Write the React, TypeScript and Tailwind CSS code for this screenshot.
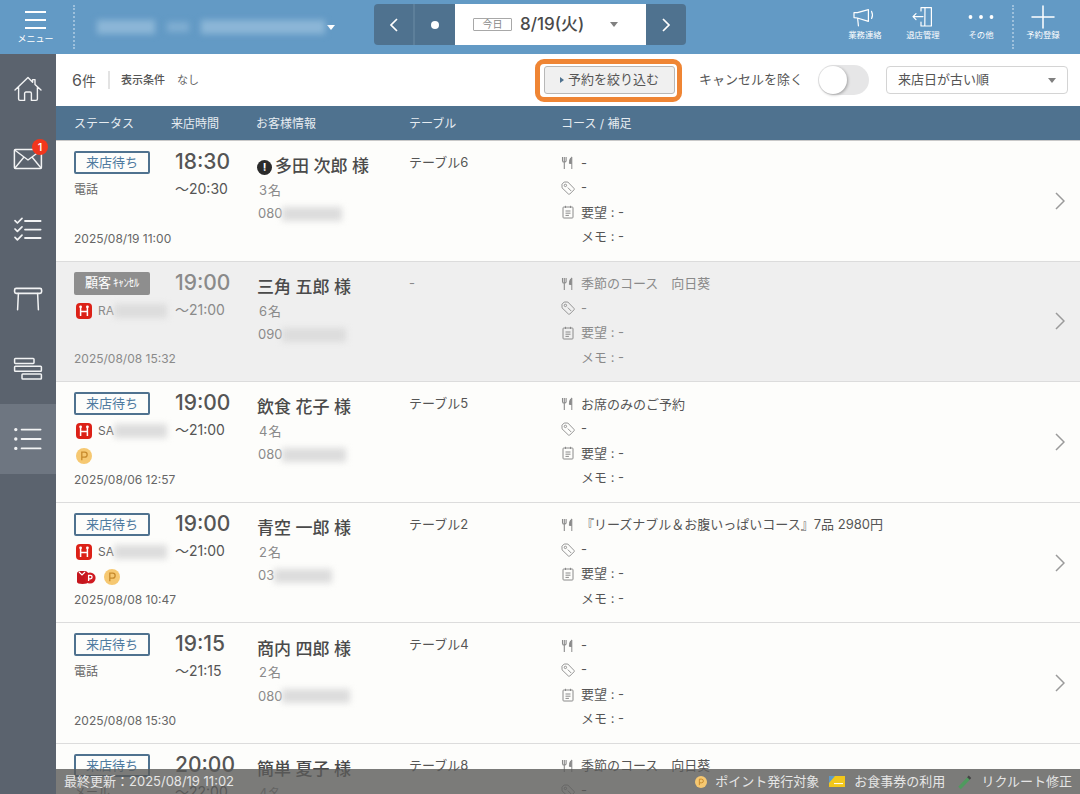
import React from "react";

type Row = {
  status: "wait" | "cancel";
  time: string;
  end: string;
  source?: string;
  code?: string;
  coin?: boolean;
  redPoint?: boolean;
  date: string;
  name: string;
  alert?: boolean;
  count: string;
  tel: string;
  telBlur: number;
  table: string;
  course: string;
};

const rows: Row[] = [
  { status: "wait", time: "18:30", end: "〜20:30", source: "電話", date: "2025/08/19 11:00", name: "多田 次郎 様", alert: true, count: "3名", tel: "080", telBlur: 60, table: "テーブル6", course: "-" },
  { status: "cancel", time: "19:00", end: "〜21:00", code: "RA", date: "2025/08/08 15:32", name: "三角 五郎 様", count: "6名", tel: "090", telBlur: 64, table: "-", course: "季節のコース　向日葵" },
  { status: "wait", time: "19:00", end: "〜21:00", code: "SA", coin: true, date: "2025/08/06 12:57", name: "飲食 花子 様", count: "4名", tel: "080", telBlur: 64, table: "テーブル5", course: "お席のみのご予約" },
  { status: "wait", time: "19:00", end: "〜21:00", code: "SA", coin: true, redPoint: true, date: "2025/08/08 10:47", name: "青空 一郎 様", count: "2名", tel: "03", telBlur: 58, table: "テーブル2", course: "『リーズナブル＆お腹いっぱいコース』7品 2980円" },
  { status: "wait", time: "19:15", end: "〜21:15", source: "電話", date: "2025/08/08 15:30", name: "商内 四郎 様", count: "2名", tel: "080", telBlur: 68, table: "テーブル4", course: "-" },
  { status: "wait", time: "20:00", end: "〜22:00", source: "メール", date: "", name: "簡単 夏子 様", count: "4名", tel: "", telBlur: 0, table: "テーブル8", course: "季節のコース　向日葵" },
];

const Blurred = ({ w, h = 14, className = "bg-[#dcdcdc]" }: { w: number; h?: number; className?: string }) => (
  <span className={`inline-block shrink-0 blur-[3px] ${className}`} style={{ width: w, height: h }} />
);

const Coin = ({ size = 16 }: { size?: number }) => (
  <svg width={size} height={size} viewBox="0 0 16 16" className="shrink-0">
    <circle cx="8" cy="8" r="8" fill="#f6c871" />
    <path d="M5.8 12.2V4.2h2.9a2.4 2.4 0 0 1 0 4.9H5.8" fill="none" stroke="#c78a2c" strokeWidth="1.3" />
  </svg>
);

const RedH = () => (
  <svg width="16" height="16" viewBox="0 0 16 16" className="shrink-0">
    <rect width="16" height="16" rx="4" fill="#dc2117" />
    <path d="M4.6 4v9M11.4 4v9M4.6 8.6h6.8" stroke="#fff" strokeWidth="1.5" fill="none" />
    <circle cx="4.6" cy="3.8" r="1.4" fill="#fff" />
    <circle cx="11.4" cy="3.8" r="1.4" fill="#fff" />
  </svg>
);

const RedPoint = () => (
  <svg width="20" height="14" viewBox="0 0 20 14" className="shrink-0">
    <path d="M1 3.5C1 1.5 3 1 6.5 1S12 1.5 12 3.5V12c0 1-2 2-5.5 2S1 13 1 12z" fill="#c5161d" />
    <path d="M3 2l3 3 3-3" fill="none" stroke="#fff" strokeWidth="1.2" />
    <circle cx="14" cy="8" r="5.6" fill="#d01a20" />
    <path d="M12.6 11V5.4h1.8a1.6 1.6 0 0 1 0 3.4h-1.8" fill="none" stroke="#fff" strokeWidth="1.3" />
  </svg>
);

const Fork = () => (
  <svg width="14" height="14" viewBox="0 0 14 14" className="shrink-0" fill="none" stroke="#8a8a8a">
    <path d="M1.5 1v3.4a1.8 1.8 0 0 0 3.6 0V1M3.3 1v12" strokeWidth="1.1" />
    <path d="M10.8 13V1C9 2 8.4 4.4 8.4 7.4h2.4" fill="#8a8a8a" strokeWidth="1" />
  </svg>
);

const Tag = () => (
  <svg width="14" height="14" viewBox="0 0 14 14" className="shrink-0" fill="none" stroke="#8a8a8a" strokeWidth="0.9">
    <path d="M1 3.2 3.2 1h3.6l6.2 6.4a1 1 0 0 1 0 1.4l-4.2 4.2a1 1 0 0 1-1.4 0L1 6.8z" />
    <circle cx="4.4" cy="4.4" r="1.2" />
    <path d="M6.8 6.6l3.4 3.4" />
  </svg>
);

const Memo = () => (
  <svg width="14" height="14" viewBox="0 0 14 14" className="shrink-0" fill="none" stroke="#8a8a8a" strokeWidth="1">
    <rect x="2" y="2" width="10" height="11" rx="0.8" />
    <path d="M4.5 0.8v2.2M9.5 0.8v2.2M4.5 6h5M4.5 8.2h5M4.5 10.4h3.4" />
  </svg>
);

const NavIcon = ({ children }: { children: React.ReactNode }) => (
  <svg width="32" height="32" viewBox="0 0 32 32" fill="none" stroke="#f2f3f4" strokeWidth="1.4" strokeLinecap="round" strokeLinejoin="round">
    {children}
  </svg>
);

const Sidebar = () => (
  <aside className="flex w-[56px] shrink-0 flex-col bg-[#5b636e]">
    <div className="flex h-[70px] items-center justify-center">
      <NavIcon>
        <path d="M3 17 16 4.6l4.6 4.6V6.6h2.4v5L29 17M6.6 14.6V26a1.4 1.4 0 0 0 1.4 1.4h4.6v-7a1.4 1.4 0 0 1 1.4-1.4h4a1.4 1.4 0 0 1 1.4 1.4v7H24a1.4 1.4 0 0 0 1.4-1.4V14.6" />
      </NavIcon>
    </div>
    <div className="relative flex h-[70px] items-center justify-center">
      <NavIcon>
        <rect x="2.4" y="6.4" width="27" height="19" rx="1" strokeWidth="1.5" />
        <path d="M3 7.2 16 17 29 7.2M3 25 12 14M29 25 20 14" />
      </NavIcon>
      <span className="absolute left-[32px] top-[15px] flex h-[16px] w-[16px] items-center justify-center rounded-full bg-[#f1361d] text-[11px] font-medium leading-none text-white">1</span>
    </div>
    <div className="flex h-[70px] items-center justify-center">
      <NavIcon>
        <path d="M3 7.6l2.4 2.4L10 5.4M3 16l2.4 2.4L10 13.8M3 24.4l2.4 2.4 4.6-4.6" strokeWidth="1.7" />
        <path d="M13 8h15.6M13 16.6h15.6M13 25h15.6" strokeWidth="1.8" />
      </NavIcon>
    </div>
    <div className="flex h-[70px] items-center justify-center">
      <NavIcon>
        <rect x="2.6" y="5.4" width="27" height="5" rx="1.6" strokeWidth="1.6" />
        <path d="M6.4 10.4 5.6 26.8M25.6 10.4l.8 16.4" strokeWidth="1.5" />
      </NavIcon>
    </div>
    <div className="flex h-[70px] items-center justify-center">
      <NavIcon>
        <rect x="2.6" y="5.4" width="19.4" height="5" rx="0.8" strokeWidth="1.5" />
        <rect x="2.6" y="13.2" width="26.8" height="5" rx="0.8" strokeWidth="1.5" />
        <rect x="10" y="21" width="19.4" height="5" rx="0.8" strokeWidth="1.5" />
      </NavIcon>
    </div>
    <div className="flex h-[70px] items-center justify-center bg-[#6e7681]">
      <NavIcon>
        <path d="M9.6 6.6h19M9.6 16h19M9.6 25.4h19" strokeWidth="1.8" />
        <circle cx="3.8" cy="6.6" r="1" fill="#f2f3f4" />
        <circle cx="3.8" cy="16" r="1" fill="#f2f3f4" />
        <circle cx="3.8" cy="25.4" r="1" fill="#f2f3f4" />
      </NavIcon>
    </div>
  </aside>
);

const TopAction = ({ label, children }: { label: string; children: React.ReactNode }) => (
  <div className="flex w-[58px] flex-col items-center self-start pt-[4px]">
    <svg width="26" height="26" viewBox="0 0 26 26" fill="none" stroke="#fff" strokeWidth="1.2" strokeLinecap="round" strokeLinejoin="round">
      {children}
    </svg>
    <span className="-mt-[1px] whitespace-nowrap text-[8.4px] leading-[12px] text-white">{label}</span>
  </div>
);

const TopBar = () => (
  <header className="flex h-[54px] shrink-0 items-center bg-[#639ac5] text-white">
    <div className="flex h-full w-[73px] flex-col items-center pr-[2px] pt-[11px]">
      <div className="flex w-[21px] flex-col gap-[6px]">
        <span className="h-[2px] bg-white" />
        <span className="h-[2px] bg-white" />
        <span className="h-[2px] bg-white" />
      </div>
      <span className="mt-[4px] whitespace-nowrap text-[9px] leading-[12px]">メニュー</span>
    </div>
    <div className="h-[44px] border-l-2 border-dotted border-[#9dc0dc]" />
    <div className="ml-[22px] flex w-[277px] items-center">
      <div className="flex w-[228px] items-center gap-[12px]">
        <Blurred w={58} h={14} className="bg-[#8cb6d7]" />
        <Blurred w={22} h={10} className="bg-[#80aed2]" />
        <Blurred w={124} h={14} className="bg-[#8cb6d7]" />
      </div>
      <span className="ml-[2px] h-0 w-0 border-x-[4px] border-t-[5px] border-x-transparent border-t-white" />
    </div>
    <div className="mt-[4px] flex h-[41px] w-[312px] shrink-0 self-start overflow-hidden rounded-[4px] bg-[#4f728f]">
      <div className="flex w-[41px] items-center justify-center border-r-2 border-[#5d7f9a]">
        <svg width="12" height="16" viewBox="0 0 12 16" fill="none" stroke="#fff" strokeWidth="1.7"><path d="M9 2 3 8l6 6" /></svg>
      </div>
      <div className="flex w-[40px] items-center justify-center">
        <span className="h-[8px] w-[8px] rounded-full bg-white" />
      </div>
      <div className="flex w-[191px] items-center bg-white pl-[18px]">
        <span className="flex h-[13px] w-[39px] items-center justify-center rounded-[1px] border border-[#a8a8a8] text-[10px] text-[#888]">今日</span>
        <span className="ml-[8px] whitespace-nowrap text-[17px] font-medium text-[#4a4a4a]">8/19(火)</span>
        <span className="ml-auto mr-[28px] h-0 w-0 border-x-[4px] border-t-[5px] border-x-transparent border-t-[#808080]" />
      </div>
      <div className="flex w-[40px] items-center justify-center">
        <svg width="12" height="16" viewBox="0 0 12 16" fill="none" stroke="#fff" strokeWidth="1.7"><path d="m3 2 6 6-6 6" /></svg>
      </div>
    </div>
    <div className="ml-[150px] flex h-full items-center">
      <TopAction label="業務連絡">
        <path d="M2 8.6v5l3.4.4 11 3.4V5.6L5.4 8.6zM5.6 14.2l.8 7.6M19.6 7.4c1 2 1 5 0 7" />
      </TopAction>
      <TopAction label="退店管理">
        <path d="M11 7V3.6h10.4v18.4H11v-4M15 3.6l-.2 18.4M3 12.6h10M6 9.6l-3 3 3 3" />
      </TopAction>
      <TopAction label="その他">
        <circle cx="2.5" cy="13" r="1.3" fill="#fff" />
        <circle cx="13" cy="13" r="1.3" fill="#fff" />
        <circle cx="23.5" cy="13" r="1.3" fill="#fff" />
      </TopAction>
      <div className="ml-[2px] h-[44px] border-l-2 border-dotted border-[#9dc0dc]" />
      <TopAction label="予約登録">
        <path d="M13 2v22M2 13h22" strokeWidth="1.5" />
      </TopAction>
    </div>
  </header>
);

const FilterBar = () => (
  <div className="flex h-[52px] shrink-0 items-center whitespace-nowrap bg-white pl-[16px] pr-[12px]">
    <span className="text-[14px] text-[#555]"><span className="text-[16px]">6</span>件</span>
    <span className="ml-[12px] h-[18px] w-[2px] bg-[#e3e3e3]" />
    <span className="ml-[11px] text-[11px] font-medium text-[#555]">表示条件</span>
    <span className="ml-[12px] text-[11px] text-[#666]">なし</span>
    <div className="ml-auto rounded-[9px] border-[5px] border-[#ef8534] bg-white pb-[3px] pl-[4px] pr-[2px] pt-[2px]">
      <div className="flex h-[28px] w-[131px] items-center justify-center gap-[4px] rounded-[3px] border border-[#b8b8b8] bg-[#f0f0f0]">
        <span className="h-0 w-0 border-y-[3px] border-l-[4px] border-y-transparent border-l-[#4f728f]" />
        <span className="text-[13px] text-[#555]">予約を絞り込む</span>
      </div>
    </div>
    <span className="ml-[17px] text-[13px] text-[#555]">キャンセルを除く</span>
    <div className="relative ml-[15px] h-[30px] w-[51px] shrink-0 rounded-full bg-[#e6e6e7]">
      <span className="absolute left-[1px] top-[1px] h-[28px] w-[28px] rounded-full bg-white shadow-[1px_1px_3px_rgba(0,0,0,0.3)]" />
    </div>
    <div className="ml-[17px] flex h-[28px] w-[182px] shrink-0 items-center justify-between rounded-[4px] border border-[#d4d4d4] px-[11px]">
      <span className="text-[13px] text-[#555]">来店日が古い順</span>
      <span className="h-0 w-0 border-x-[4px] border-t-[5px] border-x-transparent border-t-[#808080]" />
    </div>
  </div>
);

const TableHead = () => (
  <div className="flex h-[35px] shrink-0 items-center border-b border-[#c9c9c9] bg-[#4f728f] pl-[18px] pt-[1px] text-[12px] text-[#e6ecf1]">
    <span className="w-[97px]">ステータス</span>
    <span className="w-[85px]">来店時間</span>
    <span className="w-[153px]">お客様情報</span>
    <span className="w-[152px]">テーブル</span>
    <span>コース / 補足</span>
  </div>
);

const ReservationRow = ({ r }: { r: Row }) => {
  const off = r.status === "cancel";
  return (
    <div className={`flex h-[120.6px] shrink-0 whitespace-nowrap border-b border-[#dcdcdc] pl-[18px] ${off ? "bg-[#efefef]" : "bg-[#fdfdfb]"}`}>
      <div className={`flex w-[101px] shrink-0 flex-col pb-[14px] pt-[10px] ${off ? "text-[#8a8a8a]" : "text-[#666]"}`}>
        {off ? (
          <span className="flex h-[23px] w-[76px] shrink-0 items-center justify-center rounded-[2px] bg-[#8e8e8e] text-[13px] text-white">顧客<span className="ml-[2px] text-[11px] tracking-tight">ｷｬﾝｾﾙ</span></span>
        ) : (
          <span className="flex h-[23px] w-[76px] shrink-0 items-center justify-center rounded-[2px] border-2 border-[#4f728f] text-[13px] text-[#4f7ba0]">来店待ち</span>
        )}
        <div className="mt-[7px] flex h-[18px] shrink-0 items-center text-[12px]">
          {r.source ? <span>{r.source}</span> : (
            <>
              <span className="ml-[2px]"><RedH /></span>
              <span className="ml-[6px] text-[12px]">{r.code}</span>
              <Blurred w={53} h={14} />
            </>
          )}
        </div>
        {(r.coin || r.redPoint) && (
          <div className="mt-[8px] flex items-center gap-[8px] pl-[2px]">
            {r.redPoint && <RedPoint />}
            {r.coin && <Coin />}
          </div>
        )}
        <span className="mt-auto text-[12px] leading-[16px]">{r.date}</span>
      </div>
      <div className={`w-[82px] shrink-0 pt-[8px] ${off ? "text-[#8a8a8a]" : "text-[#555]"}`}>
        <div className="text-[21px] font-medium leading-[26px]">{r.time}</div>
        <div className="mt-[4px] text-[14px] leading-[20px]">{r.end}</div>
      </div>
      <div className="w-[152px] shrink-0 pt-[14px]">
        <div className="flex h-[24px] items-center gap-[3px] text-[17px] font-medium text-[#4a4a4a]">
          {r.alert && (
            <span className="flex h-[15px] w-[15px] items-center justify-center rounded-full bg-[#2b2b2b] text-[11px] font-bold text-white">!</span>
          )}
          {r.name}
        </div>
        <div className="-mt-[1px] h-[24px] pl-[2px] text-[13px] leading-[24px] tracking-[1px] text-[#8a8a8a]">{r.count}</div>
        <div className="flex h-[24px] items-center pl-[1px] text-[13px] text-[#8a8a8a]">
          {r.tel}
          {r.telBlur > 0 && <Blurred w={r.telBlur} h={14} />}
        </div>
      </div>
      <div className={`w-[152px] shrink-0 pt-[11px] text-[13px] leading-[20px] ${off ? "text-[#8a8a8a]" : "text-[#555]"}`}>{r.table}</div>
      <div className={`flex-1 pt-[10px] text-[13px] ${off ? "text-[#8a8a8a]" : "text-[#555]"}`}>
        <div className="flex h-[24.5px] items-center gap-[6px]"><Fork /><span>{r.course}</span></div>
        <div className="flex h-[24.5px] items-center gap-[6px]"><Tag /><span>-</span></div>
        <div className="flex h-[24.5px] items-center gap-[6px]"><Memo /><span>要望 : -</span></div>
        <div className="flex h-[24.5px] items-center pl-[20px]"><span>メモ : -</span></div>
      </div>
      <div className="flex w-[32px] shrink-0 items-center pl-[7px]">
        <svg width="10" height="18" viewBox="0 0 10 18" fill="none" stroke="#9a9a9a" strokeWidth="1.5"><path d="m1 1 8 8-8 8" /></svg>
      </div>
    </div>
  );
};

const Footer = () => (
  <div className="absolute bottom-0 left-0 right-0 flex h-[25px] items-center whitespace-nowrap bg-[#5a5a59]/80 pl-[8px] pr-[8px] text-[13px] text-[#e6e6e6]">
    <span>最終更新：2025/08/19 11:02</span>
    <div className="ml-auto flex items-center">
      <Coin size={12} />
      <span className="ml-[8px]">ポイント発行対象</span>
      <svg width="16" height="11" viewBox="0 0 16 11" className="ml-[10px]">
        <rect width="16" height="11" fill="#f2c71a" />
        <path d="M0 0h6L0 7z" fill="#5e9ac8" />
        <path d="M5 7.6h9" stroke="#fff" strokeWidth="1" />
      </svg>
      <span className="ml-[9px]">お食事券の利用</span>
      <svg width="16" height="16" viewBox="0 0 16 16" className="ml-[12px]">
        <path d="M2.5 14 11.6 4.6" stroke="#4f9a5e" strokeWidth="3.6" />
        <path d="M11.4 4.4 13 2.8" stroke="#444" strokeWidth="3.6" />
      </svg>
      <span className="ml-[8px]">リクルート修正</span>
    </div>
  </div>
);

export default function App() {
  return (
    <div className="relative flex h-[794px] w-[1080px] flex-col overflow-hidden bg-white font-['Inter','Noto_Sans_CJK_JP',sans-serif]">
      <TopBar />
      <div className="flex min-h-0 flex-1">
        <Sidebar />
        <main className="relative flex min-w-0 flex-1 flex-col overflow-hidden">
          <FilterBar />
          <TableHead />
          {rows.map((r, i) => (
            <ReservationRow key={i} r={r} />
          ))}
          <Footer />
        </main>
      </div>
    </div>
  );
}
